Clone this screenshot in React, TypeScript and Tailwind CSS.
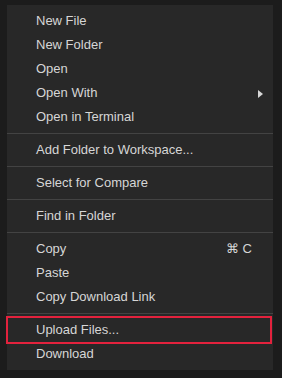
import React from "react";

type Item = { label: string; shortcut?: string; submenu?: boolean } | "sep";

const items: Item[] = [
  { label: "New File" },
  { label: "New Folder" },
  { label: "Open" },
  { label: "Open With", submenu: true },
  { label: "Open in Terminal" },
  "sep",
  { label: "Add Folder to Workspace..." },
  "sep",
  { label: "Select for Compare" },
  "sep",
  { label: "Find in Folder" },
  "sep",
  { label: "Copy", shortcut: "⌘ C" },
  { label: "Paste" },
  { label: "Copy Download Link" },
  "sep",
  { label: "Upload Files..." },
  { label: "Download" },
];

export default function App() {
  return (
    <div
      className="relative w-[282px] h-[378px] bg-[#1c1c1c] pt-[5px] pl-[7px]"
      style={{ fontFamily: '"Liberation Sans", Arial, sans-serif' }}
    >
      <div className="w-[266px] bg-[#282828] py-1 flex flex-col">
        {items.map((it, i) =>
          it === "sep" ? (
            <div key={i} className="py-1">
              <div className="h-px bg-[#434343]" />
            </div>
          ) : (
            <div
              key={i}
              className="h-6 flex items-center pl-[29px] pr-[10px] text-[13px] text-[#d6d6d6]"
            >
              <span className="flex-1">{it.label}</span>
              {it.shortcut && <span className="mr-[11px]">{it.shortcut}</span>}
              {it.submenu && (
                <svg width="5" height="8" viewBox="0 0 5 8" className="mt-[1px]">
                  <path d="M0 0 L5 4 L0 8 Z" fill="#d6d6d6" />
                </svg>
              )}
            </div>
          )
        )}
      </div>
      <div className="absolute left-[6px] top-[316px] w-[266px] h-[28px] border-2 border-[#e3223d]" />
    </div>
  );
}
